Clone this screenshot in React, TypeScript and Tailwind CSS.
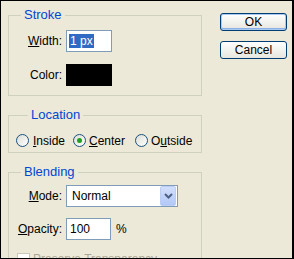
import React from "react";

const font = { fontFamily: '"Liberation Sans", Arial, sans-serif' };

const Radio = ({ checked }: { checked?: boolean }) => (
  <span className="w-[13px] h-[13px] rounded-full border border-[#1c5180] bg-gradient-to-br from-[#dcdcd6] to-white flex items-center justify-center shrink-0">
    {checked && <span className="w-[5px] h-[5px] rounded-full bg-[#21a121]" />}
  </span>
);

const XpButton = ({ label, primary }: { label: string; primary?: boolean }) => (
  <button
    className={
      "w-[67px] h-[18px] rounded-[3px] border border-[#003c74] bg-gradient-to-b from-white to-[#e6e5df] text-[12px] leading-none text-black flex items-center justify-center " +
      (primary ? "shadow-[inset_0_0_0_1px_#a8c9f0,inset_0_-1px_0_1px_#8bb0e6]" : "")
    }
  >
    {label}
  </button>
);

export default function App() {
  return (
    <div
      className="w-[294px] h-[259px] overflow-hidden bg-[#ece9d8] border-t border-l border-b border-r-2 border-black flex text-[12px] text-black"
      style={font}
    >
      {/* left: groups */}
      <div className="pl-[7px] pt-[7px] flex flex-col gap-[12px]">
        <fieldset className="w-[194px] border border-[#d0d0bf] px-0 pt-[8px] pb-[9px]">
          <legend className="ml-[12px] px-[3px] leading-[14px] text-[#0046d5] text-[13px]">Stroke</legend>
          <div className="flex items-center">
            <span className="w-[53px] text-right mr-[4px]">
              <u>W</u>idth:
            </span>
            <div className="w-[46px] h-[22px] border border-[#7f9db9] bg-white flex items-center pl-[2px]">
              <span className="bg-[#316ac5] text-white leading-[14px] px-[1px]">1 px</span>
            </div>
          </div>
          <div className="flex items-center mt-[12px]">
            <span className="w-[53px] text-right mr-[4px]">Color:</span>
            <div className="w-[46px] h-[22px] bg-black" />
          </div>
        </fieldset>

        <fieldset className="w-[194px] border border-[#d0d0bf] pl-[7px] pt-[12px] pb-[5px]">
          <legend className="ml-[12px] px-[3px] leading-[14px] text-[#0046d5] text-[13px]">Location</legend>
          <div className="flex items-center h-[13px]">
            <label className="w-[57px] flex items-center gap-[4px]">
              <Radio />
              <span>
                <u>I</u>nside
              </span>
            </label>
            <label className="w-[62px] flex items-center gap-[3px]">
              <Radio checked />
              <span>
                <u>C</u>enter
              </span>
            </label>
            <label className="flex items-center gap-[3px]">
              <Radio />
              <span>
                O<u>u</u>tside
              </span>
            </label>
          </div>
        </fieldset>

        <fieldset className="w-[194px] h-[120px] border border-[#d0d0bf] pt-[6px]">
          <legend className="ml-[12px] px-[3px] leading-[14px] text-[#0046d5] text-[13px]">Blending</legend>
          <div className="flex items-center">
            <span className="w-[53px] text-right mr-[4px]">
              <u>M</u>ode:
            </span>
            <div className="w-[112px] h-[22px] border border-[#7f9db9] bg-white flex items-center">
              <span className="flex-1 pl-[5px]">Normal</span>
              <span className="w-[16px] h-[20px] mr-[1px] rounded-[2px] border border-[#b9cdf5] bg-gradient-to-b from-[#d2defc] to-[#b2c8f6] flex items-center justify-center">
                <svg width="9" height="6" viewBox="0 0 9 6">
                  <path d="M1 1 L4.5 4.5 L8 1" fill="none" stroke="#4d6185" strokeWidth="2" />
                </svg>
              </span>
            </div>
          </div>
          <div className="flex items-center mt-[11px]">
            <span className="w-[53px] text-right mr-[4px]">
              <u>O</u>pacity:
            </span>
            <div className="w-[45px] h-[22px] border border-[#7f9db9] bg-white flex items-center pl-[3px]">100</div>
            <span className="ml-[5px]">%</span>
          </div>
          <div className="flex items-center mt-[10px] pl-[8px] gap-[3px] text-[#aca899]">
            <span className="w-[13px] h-[13px] border border-[#cac8bb] bg-white shrink-0" />
            <span>Preserve Transparency</span>
          </div>
        </fieldset>
      </div>

      {/* right: buttons */}
      <div className="ml-[18px] pt-[12px] flex flex-col gap-[10px]">
        <XpButton label="OK" primary />
        <XpButton label="Cancel" />
      </div>
    </div>
  );
}
